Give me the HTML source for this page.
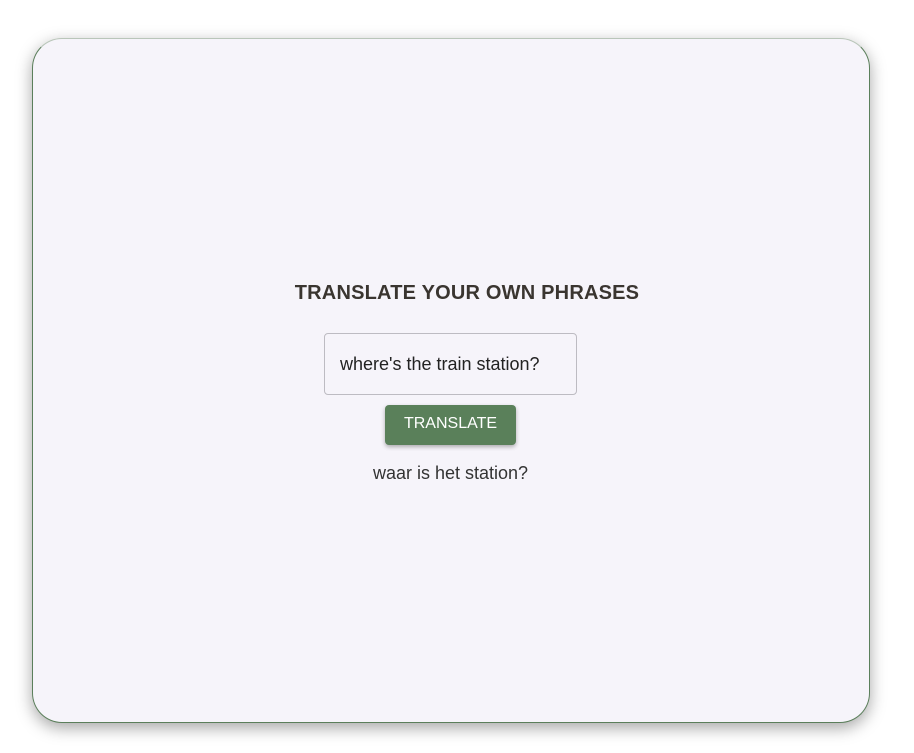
<!DOCTYPE html>
<html><head><style>
body{margin:0;width:914px;height:753px;background:#fff;font-family:"Liberation Sans",sans-serif;}
.card{position:absolute;left:32px;top:38px;width:836px;height:683px;background:#f6f4fa;border:1px solid #5b7f5b;border-top-color:#b9c6b9;border-radius:30px;box-shadow:0 5px 16px rgba(0,0,0,.35);}
h1{position:absolute;left:20px;right:0;top:282px;margin:0;text-align:center;font-size:20px;font-weight:bold;color:#3a3530;letter-spacing:0.2px;}
.inp{position:absolute;left:324px;top:333px;width:253px;height:62px;border:1px solid #bdbbc2;border-radius:4px;box-sizing:border-box;background:#f6f4fa;font-size:18px;color:#222;line-height:60px;padding-left:15px;}
.btn{position:absolute;left:385px;top:405px;width:131px;height:40px;background:#5a805a;border-radius:4px;color:#fff;font-size:16px;text-align:center;line-height:38px;box-shadow:0 2px 4px rgba(0,0,0,.3);}
.res{position:absolute;left:0;right:13px;top:463px;text-align:center;font-size:18px;color:#333;}
</style></head><body>
<div class="card"></div>
<h1>TRANSLATE YOUR OWN PHRASES</h1>
<div class="inp">where's the train station?</div>
<div class="btn">TRANSLATE</div>
<div class="res">waar is het station?</div>
</body></html>
